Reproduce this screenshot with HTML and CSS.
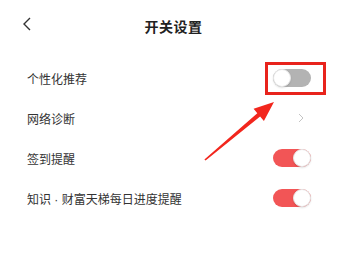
FILE: index.html
```html
<!DOCTYPE html>
<html lang="zh-CN">
<head>
    <meta charset="UTF-8">
    <meta name="viewport" content="width=device-width, initial-scale=1.0">
    <title>开关设置</title>
    <link rel="stylesheet" href="styles.css">
</head>
<body>
    <div class="page">
        <div class="header">
            <span class="back">
                <svg width="10" height="14" viewBox="0 0 10 14"><path d="M8 1 L2 7 L8 13" fill="none" stroke="#333" stroke-width="1.4"/></svg>
            </span>
            <span class="title">开关设置</span>
        </div>

        <div class="list">
            <div class="row">
                <span class="label">个性化推荐</span>
                <span class="switch"></span>
            </div>
            <div class="row">
                <span class="label">网络诊断</span>
                <span class="more">
                    <svg width="6" height="10" viewBox="0 0 6 10"><path d="M1 1 L5 5 L1 9" fill="none" stroke="#c4c4c4" stroke-width="1"/></svg>
                </span>
            </div>
            <div class="row">
                <span class="label">签到提醒</span>
                <span class="switch on"></span>
            </div>
            <div class="row">
                <span class="label">知识<span class="dot"> · </span>财富天梯每日进度提醒</span>
                <span class="switch on"></span>
            </div>
        </div>

        <!-- annotation -->
        <div class="mark"></div>
        <svg class="pointer" width="80" height="70" viewBox="0 0 80 70">
            <polygon points="74,7 63.9,26 60.1,21.6 5.6,65.6 4.4,64.4 57.3,18.2 53.6,13.8" fill="#f2261d"/>
        </svg>
    </div>
</body>
</html>
```

FILE: styles.css
```css
body{
    margin: 0;
    background: #fff;
    font-family: "Noto Sans CJK SC", "Noto Sans", sans-serif;
    color: #333;
}

.page{
    position: relative;
    width: 347px;
    height: 276px;
    overflow: hidden;
}

.header{
    height: 52px;
    display: flex;
    align-items: center;
    justify-content: center;
    position: relative;
}

.back{
    position: absolute;
    left: 22px;
    top: 17px;
    display: flex;
}

.title{
    font-size: 14px;
    font-weight: 700;
    color: #222;
    letter-spacing: 0.5px;
}

.list{
    padding-top: 6px;
}

.row{
    height: 40px;
    display: flex;
    align-items: center;
    justify-content: space-between;
    padding: 0 36px 0 27px;
}

.label{
    font-size: 12px;
    color: #333;
}

.dot{
    font-family: "Liberation Sans", sans-serif;
}

.more{
    display: flex;
    margin-right: 7px;
}

.switch{
    width: 38px;
    height: 18px;
    border-radius: 9px;
    background: #b3b3b3;
    position: relative;
}

.switch::after{
    content: "";
    position: absolute;
    top: 0;
    left: 0;
    width: 18px;
    height: 18px;
    box-sizing: border-box;
    border-radius: 50%;
    background: #fff;
    border: 1px solid #e6e6e6;
    box-shadow: 0 1px 2px rgba(0,0,0,0.12);
}

.switch.on{
    background: #f25556;
}

.switch.on::after{
    left: 20px;
}

.mark{
    position: absolute;
    left: 265px;
    top: 62px;
    width: 61px;
    height: 33px;
    box-sizing: border-box;
    border: 3px solid #e8231c;
}

.pointer{
    position: absolute;
    left: 200px;
    top: 95px;
}
```
